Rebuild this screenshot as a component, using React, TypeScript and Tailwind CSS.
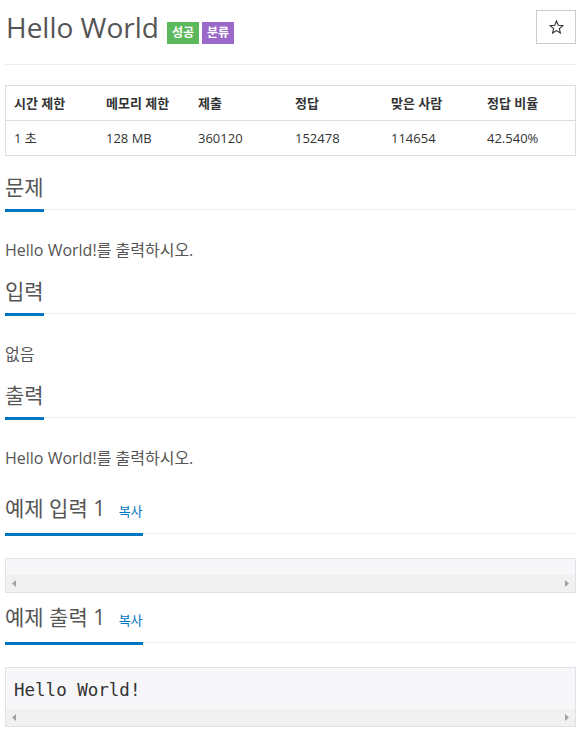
import type { ReactNode } from 'react';

const sans = { fontFamily: '"Open Sans", "Noto Sans CJK KR", sans-serif' };

function SectionHead({ children, className = '' }: { children: ReactNode; className?: string }) {
  return (
    <div className={`border-b border-dotted border-[#ddd] ${className}`}>
      <h2 className="-mb-[3px] w-fit border-b-[3px] border-[#0076c0] pb-[10px] text-[21px] font-normal leading-[23px] text-[#555]">
        {children}
      </h2>
    </div>
  );
}

function ScrollBar() {
  return (
    <div className="flex h-[17px] items-center justify-between bg-[#f1f1f1] px-[6px]">
      <svg width="4" height="7" viewBox="0 0 4 7">
        <polygon points="4,0 0,3.5 4,7" fill="#a3a3a3" />
      </svg>
      <svg width="4" height="7" viewBox="0 0 4 7">
        <polygon points="0,0 4,3.5 0,7" fill="#a3a3a3" />
      </svg>
    </div>
  );
}

function Sample({ text }: { text?: string }) {
  return (
    <div className="border border-[#e1e1e8] bg-[#f7f7f9]">
      <pre
        className={`px-[8px] text-[17.5px] leading-[25px] text-[#333] ${text ? 'pt-[10px] pb-[6px]' : 'py-[8px]'}`}
        style={{ fontFamily: '"DejaVu Sans Mono", "Liberation Mono", monospace' }}
      >
        {text}
      </pre>
      <ScrollBar />
    </div>
  );
}

export default function App() {
  const heads = ['시간 제한', '메모리 제한', '제출', '정답', '맞은 사람', '정답 비율'];
  const vals = ['1 초', '128 MB', '360120', '152478', '114654', '42.540%'];

  return (
    <div className="bg-white pl-[5px] pr-[12px] pb-[20px]" style={sans}>
      {/* title */}
      <div className="border-b border-[#eee] pt-[10px] pb-[20px]">
        <div className="flex items-start justify-between">
          <div className="mt-[1px] flex items-end gap-[8px]">
            <h1 className="pl-px text-[28px] font-normal leading-[33px] text-[#555]">Hello World</h1>
            <div className="flex gap-[3px]">
              <span className="flex h-[22px] items-center bg-[#5cb85c] px-[5px] text-[12px] font-bold text-white">성공</span>
              <span className="flex h-[22px] items-center bg-[#9b69c9] px-[5px] text-[12px] font-bold text-white">분류</span>
            </div>
          </div>
          <button className="flex h-[34px] w-[40px] items-center justify-center border border-[#ccc] bg-white">
            <svg width="15" height="14" viewBox="0 0 24 23">
              <polygon
                points="12,1.5 14.9,8.6 22.5,9.2 16.7,14.1 18.5,21.5 12,17.5 5.5,21.5 7.3,14.1 1.5,9.2 9.1,8.6"
                fill="none"
                stroke="#333"
                strokeWidth="1.8"
                strokeLinejoin="miter"
              />
            </svg>
          </button>
        </div>
      </div>

      {/* info table */}
      <div className="mt-[20px] border border-[#ddd] text-[13px] text-[#333]">
        <div className="grid grid-cols-[92px_92px_97px_96px_96px_1fr] border-b border-[#ddd]">
          {heads.map((h) => (
            <div key={h} className="px-[8px] py-[8px] font-bold leading-[18px]">
              {h}
            </div>
          ))}
        </div>
        <div className="grid grid-cols-[92px_92px_97px_96px_96px_1fr]">
          {vals.map((v) => (
            <div key={v} className="px-[8px] py-[8px] leading-[18px]">
              {v}
            </div>
          ))}
        </div>
      </div>

      <SectionHead className="mt-[20px]">문제</SectionHead>
      <p className="mt-[29px] text-[16px] leading-[22px] text-[#555]">Hello World!를 출력하시오.</p>

      <SectionHead className="mt-[19px]">입력</SectionHead>
      <p className="mt-[29px] text-[16px] leading-[22px] text-[#555]">없음</p>

      <SectionHead className="mt-[19px]">출력</SectionHead>
      <p className="mt-[29px] text-[16px] leading-[22px] text-[#555]">Hello World!를 출력하시오.</p>

      <SectionHead className="mt-[28px]">
        예제 입력 1 <span className="ml-[8px] text-[13px] text-[#0076c0]">복사</span>
      </SectionHead>
      <div className="mt-[24px]">
        <Sample />
      </div>

      <SectionHead className="mt-[13px]">
        예제 출력 1 <span className="ml-[8px] text-[13px] text-[#0076c0]">복사</span>
      </SectionHead>
      <div className="mt-[24px]">
        <Sample text="Hello World!" />
      </div>
    </div>
  );
}
